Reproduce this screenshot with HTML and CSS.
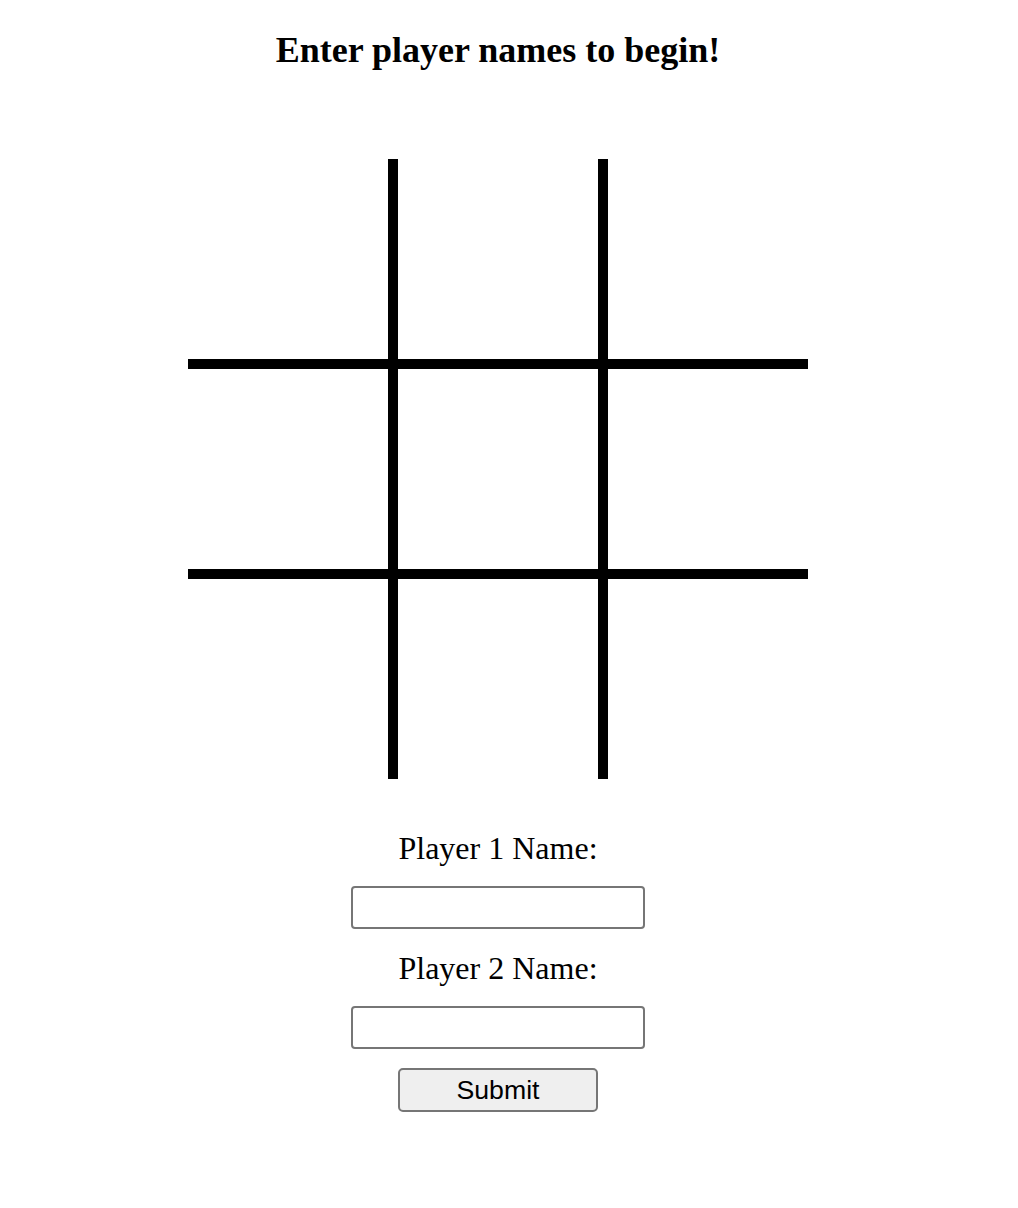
FILE: index.html
```html
<!DOCTYPE html>
<html>
<head>
<meta charset="utf-8">
<link rel="stylesheet" href="styles.css">
</head>
<body>
<main class="page">
  <h1 class="title">Enter player names to begin!</h1>
  <div class="board">
    <div class="cell"></div><div class="cell"></div><div class="cell"></div>
    <div class="cell"></div><div class="cell"></div><div class="cell"></div>
    <div class="cell"></div><div class="cell"></div><div class="cell"></div>
  </div>
  <form class="names">
    <label class="label" for="p1">Player 1 Name:</label>
    <input class="field" id="p1" type="text">
    <label class="label" for="p2">Player 2 Name:</label>
    <input class="field field-last" id="p2" type="text">
    <button class="submit" type="button">Submit</button>
  </form>
</main>
</body>
</html>
```
FILE: styles.css
```css
html, body {
  margin: 0;
  padding: 0;
  background: #fff;
}
.page {
  display: flex;
  flex-direction: column;
  align-items: center;
  padding-right: 22px;
  font-family: "Liberation Serif", "Times New Roman", serif;
  color: #000;
}
.title {
  margin: 30px 0 0 0;
  font-size: 36px;
  line-height: 41px;
  font-weight: bold;
}
.board {
  margin-top: 88px;
  display: grid;
  grid-template-columns: 200px 200px 200px;
  grid-template-rows: 200px 200px 200px;
  gap: 10px;
  background: #000;
}
.cell {
  background: #fff;
}
.names {
  margin-top: 51px;
  display: flex;
  flex-direction: column;
  align-items: center;
}
.label {
  font-size: 32px;
  line-height: 37px;
  display: block;
}
.field {
  box-sizing: border-box;
  width: 294px;
  height: 43px;
  margin: 19px 0 21px 0;
  border: 2px solid #767676;
  border-radius: 4px;
  background: #fff;
  padding: 0 4px;
  font-size: 26px;
}
.field-last {
  margin-bottom: 19px;
}
.submit {
  box-sizing: border-box;
  width: 200px;
  height: 44px;
  border: 2px solid #767676;
  border-radius: 5px;
  background: #efefef;
  font-family: "Liberation Sans", Arial, sans-serif;
  font-size: 26.67px;
  color: #000;
  padding: 0;
}
```
